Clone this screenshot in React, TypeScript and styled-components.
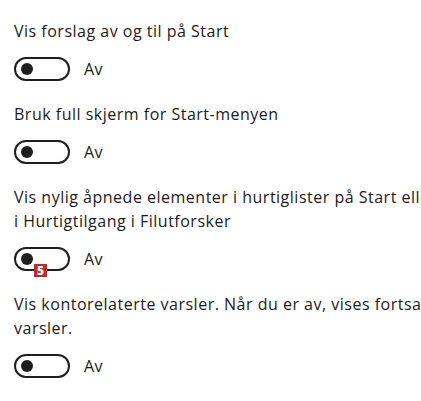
import React from "react";
import styled, { createGlobalStyle } from "styled-components";

const Global = createGlobalStyle`
  html, body { margin: 0; padding: 0; background: #fff; }
  body { font-family: "Open Sans", "Noto Sans", sans-serif; color: #1b1b1b; overflow: hidden; }
`;

const Page = styled.div`
  width: 421px;
  height: 401px;
  overflow: hidden;
  padding: 19px 0 0 14px;
  box-sizing: border-box;
  display: flex;
  flex-direction: column;
  gap: 20px;
`;

const Setting = styled.div`
  display: flex;
  flex-direction: column;
  gap: 13px;
`;

const Label = styled.div`
  font-size: 16px;
  line-height: 24px;
  letter-spacing: 0.5px;
  white-space: nowrap;
`;

const Row = styled.div`
  display: flex;
  align-items: center;
  gap: 14px;
  height: 26px;
`;

const ToggleWrap = styled.div`
  position: relative;
  width: 56px;
  height: 24px;
`;

const Track = styled.div`
  width: 56px;
  height: 24px;
  box-sizing: border-box;
  border: 2px solid #1e1e1e;
  border-radius: 12px;
  display: flex;
  align-items: center;
  padding-left: 5px;
`;

const Knob = styled.div`
  width: 12px;
  height: 12px;
  border-radius: 50%;
  background: #1e1e1e;
`;

const Badge = styled.div`
  position: absolute;
  left: 20px;
  top: 17px;
  width: 13px;
  height: 13px;
  background: #c8262e;
  color: #fff;
  font-family: "Open Sans", sans-serif;
  font-weight: 800;
  font-size: 12px;
  line-height: 13px;
  text-align: center;
`;

const State = styled.span`
  font-size: 16px;
  letter-spacing: 0.5px;
`;

function Toggle({ badge }: { badge?: string }) {
  return (
    <Row>
      <ToggleWrap>
        <Track>
          <Knob />
        </Track>
        {badge && <Badge>{badge}</Badge>}
      </ToggleWrap>
      <State>Av</State>
    </Row>
  );
}

export default function App() {
  return (
    <>
      <Global />
      <Page>
        <Setting>
          <Label>Vis forslag av og til på Start</Label>
          <Toggle />
        </Setting>
        <Setting>
          <Label>Bruk full skjerm for Start-menyen</Label>
          <Toggle />
        </Setting>
        <Setting>
          <Label>
            Vis nylig åpnede elementer i hurtiglister på Start eller
            <br />i Hurtigtilgang i Filutforsker
          </Label>
          <Toggle badge="5" />
        </Setting>
        <Setting>
          <Label>
            Vis kontorelaterte varsler. Når du er av, vises fortsatt
            <br />
            varsler.
          </Label>
          <Toggle />
        </Setting>
      </Page>
    </>
  );
}
